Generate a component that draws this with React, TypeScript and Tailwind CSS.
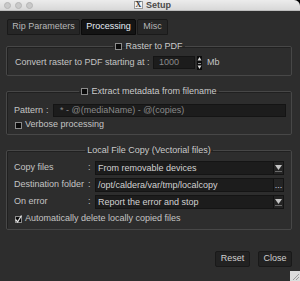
import React from "react";

function Box({ checked = false }: { checked?: boolean }) {
  return (
    <span className="inline-flex w-[7px] h-[7px] shrink-0 items-center justify-center bg-[#0b0b0b] border border-[#8c8c8c]">
      {checked && (
        <svg viewBox="0 0 7 7" className="w-[7px] h-[7px] overflow-visible">
          <path d="M0.5 3.5 L2.6 6 L6.5 -0.5" stroke="#e4e4e4" strokeWidth="1.3" fill="none" />
        </svg>
      )}
    </span>
  );
}

function Group({
  title,
  check,
  className,
  children,
}: {
  title: string;
  check?: boolean;
  className?: string;
  children: React.ReactNode;
}) {
  return (
    <fieldset
      className={
        "border border-[#474747] rounded-[2px] shadow-[inset_1px_1px_0_#202020] " + (className ?? "")
      }
    >
      <legend className="mx-auto px-[2px]">
        <span className="flex h-[10px] items-center gap-[3px] text-[9px] leading-[10px] text-[#cacaca]">
          {check && <Box />}
          {title}
        </span>
      </legend>
      {children}
    </fieldset>
  );
}

function Arrow() {
  return (
    <span className="flex w-[10px] h-full flex-col items-center justify-center gap-[1px] bg-[#242424] border-l border-[#111]">
      <svg viewBox="0 0 7 5" className="w-[7px] h-[5px]">
        <polygon points="0,0 7,0 3.5,5" fill="#c4c4c4" />
      </svg>
      <span className="w-[7px] h-px bg-[#6a6a6a]" />
    </span>
  );
}

function Select({ value, dots }: { value: string; dots?: boolean }) {
  return (
    <div className="flex w-[189px] h-[14px] bg-[#1c1c1c] border border-[#141414]">
      <span className="flex-1 pl-[2px] text-[9px] leading-[12px] text-[#d2d2d2] whitespace-nowrap overflow-hidden">
        {value}
      </span>
      {dots ? (
        <span className="flex w-[10px] items-center justify-center bg-[#242424] border-l border-[#111] text-[9px] leading-[12px] text-[#c8d0e0]">
          ...
        </span>
      ) : (
        <Arrow />
      )}
    </div>
  );
}

export default function App() {
  const rows = [
    { label: "Copy files", value: "From removable devices" },
    { label: "Destination folder", value: "/opt/caldera/var/tmp/localcopy", dots: true },
    { label: "On error", value: "Report the error and stop" },
  ];

  return (
    <div className="w-[300px] h-[281px] bg-black font-['Liberation_Sans',Arial,sans-serif]">
      <div className="relative flex h-full flex-col overflow-hidden rounded-tr-[6px] bg-[#2d2d2d]">
        {/* title bar */}
        <div className="flex h-[11px] items-center bg-gradient-to-b from-[#ececec] to-[#d8d8d8] border-b border-[#bdbdbd]">
          <div className="flex gap-[4px] pl-[4px]">
            <span className="w-[7px] h-[7px] rounded-full bg-[#c9c9c9] border border-[#b4b4b4]" />
            <span className="w-[7px] h-[7px] rounded-full bg-[#c9c9c9] border border-[#b4b4b4]" />
            <span className="w-[7px] h-[7px] rounded-full bg-[#c9c9c9] border border-[#b4b4b4]" />
          </div>
          <div className="ml-[101px] flex items-center gap-[3px]">
            <span className="flex w-[9px] h-[8px] items-center justify-center bg-[#f4f4f4] border border-[#9a9a9a] font-['Liberation_Serif',serif] text-[8px] leading-[8px] font-bold text-[#333]">
              X
            </span>
            <span className="text-[9px] leading-[10px] font-bold text-[#4a4a4a]">Setup</span>
          </div>
        </div>

        <div className="flex flex-1 flex-col pl-[6px] pr-[8px]">
          {/* tabs */}
          <div className="mt-[8px] flex h-[16px] gap-[1px] pl-[1px] text-[9px]">
            <span className="flex w-[73px] items-center justify-center bg-[#262626] border border-[#1a1a1a] rounded-t-[2px] text-[#b6b6b6]">
              Rip Parameters
            </span>
            <span className="flex w-[55px] items-center justify-center bg-[#141414] border border-[#0a0a0a] rounded-t-[2px] text-[#e6eef6]">
              Processing
            </span>
            <span className="flex w-[31px] items-center justify-center bg-[#262626] border border-[#1a1a1a] rounded-t-[2px] text-[#b6b6b6]">
              Misc
            </span>
          </div>

          {/* raster to pdf */}
          <Group title="Raster to PDF" check className="mt-[6px] pt-[5px] pb-[6px]">
            <div className="flex h-[13px] items-center pl-[8px] text-[9px] text-[#c4c4c4]">
              <span className="w-[138px] whitespace-nowrap">Convert raster to PDF starting at :</span>
              <span className="flex w-[42px] h-[13px] items-center bg-[#1c1c1c] border border-[#141414] pl-[5px] text-[#8a8a8a]">
                1000
              </span>
              <svg viewBox="0 0 5 14" className="ml-[2px] w-[5px] h-[14px]">
                <rect x="0" y="0" width="5" height="14" fill="#0c0c0c" />
                <polygon points="2.5,1 4.5,4.5 0.5,4.5" fill="#d8d8d8" />
                <rect x="1" y="7" width="3" height="1" fill="#8a8a8a" />
                <polygon points="0.5,9.5 4.5,9.5 2.5,13" fill="#d8d8d8" />
              </svg>
              <span className="ml-[5px]">Mb</span>
            </div>
          </Group>

          {/* extract metadata */}
          <Group title="Extract metadata from filename" check className="mt-[10px] pt-[8px] pb-[4px]">
            <div className="flex h-[13px] items-center pl-[7px] pr-[5px] text-[9px] text-[#c4c4c4]">
              <span className="w-[32px]">Pattern</span>
              <span className="w-[7px]">:</span>
              <span className="flex h-[13px] flex-1 items-center bg-[#1c1c1c] border border-[#141414] pl-[6px] text-[#8a8a8a] whitespace-nowrap">
                * - @(mediaName) - @(copies)
              </span>
            </div>
            <div className="mt-[3px] flex h-[10px] items-center gap-[3px] pl-[8px] text-[9px] text-[#c4c4c4]">
              <Box />
              <span>Verbose processing</span>
            </div>
          </Group>

          {/* local file copy */}
          <Group title="Local File Copy (Vectorial files)" className="mt-[10px] pt-[6px] pb-[5px]">
            <div className="flex flex-col gap-[3px] pl-[7px]">
              {rows.map((r) => (
                <div key={r.label} className="flex h-[14px] items-center text-[9px] text-[#c4c4c4]">
                  <span className="w-[74px] whitespace-nowrap">{r.label}</span>
                  <span className="w-[7px]">:</span>
                  <Select value={r.value} dots={r.dots} />
                </div>
              ))}
            </div>
            <div className="mt-[5px] flex h-[10px] items-center gap-[3px] pl-[8px] text-[9px] text-[#c4c4c4]">
              <Box checked />
              <span>Automatically delete locally copied files</span>
            </div>
          </Group>

          {/* buttons */}
          <div className="mt-[21px] flex justify-end gap-[8px] text-[9px]">
            <button className="w-[35px] h-[16px] bg-[#222] border border-[#191919] rounded-[2px] text-[#d0d0d0]">
              Reset
            </button>
            <button className="w-[34px] h-[16px] bg-[#222] border border-[#191919] rounded-[2px] text-[#d0d0d0]">
              Close
            </button>
          </div>
        </div>

        {/* resize grip */}
        <svg viewBox="0 0 10 10" className="absolute right-0 bottom-0 w-[10px] h-[10px]">
          <rect width="10" height="10" fill="#dcdcdc" />
          <path d="M3 9 L9 3 M6 9 L9 6" stroke="#8a8a8a" strokeWidth="0.8" />
        </svg>
      </div>
    </div>
  );
}
